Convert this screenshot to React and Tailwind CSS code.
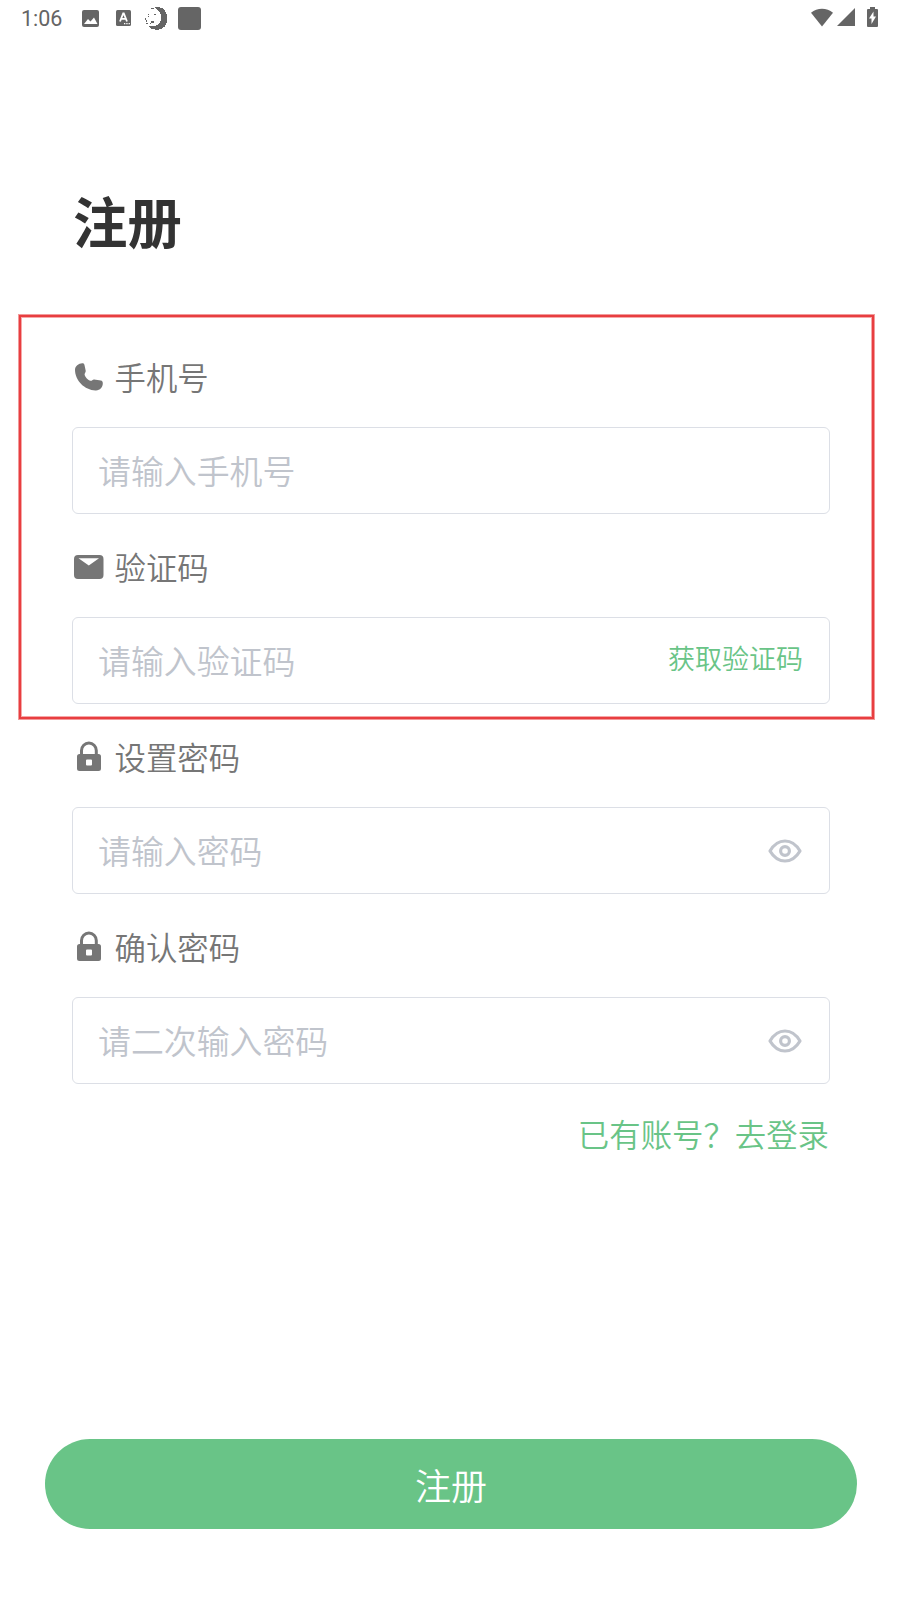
import React, { useState } from 'react'

const PhoneIcon = () => (
    <svg className="w-[34px] h-[34px]" viewBox="0 0 34 34" fill="currentColor">
        <path d="M5.2 5.2C7 3.600 9.600 2.800 11.200 3.300c1 .4 1.200 1.400 1.500 2.600l1 4.900c.3 1.700-1.300 2.400-1.100 3.900.4 2.200 3.600 5.500 5.900 6 1.500.3 2-1.500 3.700-1.300l6.600 1.200c1.500.3 2 1.200 2 2.600 0 4-2.700 7.100-6.800 7.200C13 30.700 3 20.500 3 9.800c0-1.900.8-3.400 2.200-4.600z" />
    </svg>
)

const MailIcon = () => (
    <svg className="w-[34px] h-[34px]" viewBox="0 0 34 34" fill="currentColor">
        <path fillRule="evenodd" d="M6 5h21.500a4 4 0 0 1 4 4v16a4 4 0 0 1-4 4H6a4 4 0 0 1-4-4V9a4 4 0 0 1 4-4zM6.500 8.300L16.800 15.500l10.200-7.200z" />
    </svg>
)

const LockIcon = () => (
    <svg className="w-[34px] h-[34px]" viewBox="0 0 34 34">
        <path d="M9.500 16v-5.500a7.400 7.400 0 0 1 14.800 0V16" fill="none" stroke="currentColor" strokeWidth="3" />
        <path fillRule="evenodd" fill="currentColor" d="M7.500 14h19a2.500 2.500 0 0 1 2.500 2.500v12a2.500 2.500 0 0 1-2.500 2.500h-19A2.500 2.500 0 0 1 5 28.500v-12A2.500 2.500 0 0 1 7.500 14zM15 19.500a1 1 0 0 0-1 1v4a1 1 0 0 0 1 1h4a1 1 0 0 0 1-1v-4a1 1 0 0 0-1-1z" />
    </svg>
)

const EyeIcon = () => (
    <svg className="w-[34px] h-[24px]" viewBox="0 0 34 24" fill="none" stroke="currentColor" strokeWidth="3.2" strokeLinejoin="round">
        <path d="M2 12C6 5.200 11 2 17 2s11 3.200 15 10c-4 6.800-9 10-15 10S6 18.800 2 12z" />
        <circle cx="17" cy="12" r="4.400" />
    </svg>
)

const StatusBar = () => (
    <header className="h-9 px-[22px] flex items-center justify-between text-[#656565]">
        <div className="flex items-center">
            <span className="-ml-px w-[61px] pt-[2px] font-normal font-['Roboto',sans-serif] text-[21.5px] leading-[34px]">1:06</span>
            <svg className="w-[17px] h-[17px]" viewBox="0 0 17 17">
                <rect width="17" height="17" rx="2" fill="currentColor" />
                <path d="M2 14l4-5 2.500 2.500L12 7.500l3.500 6.500z" fill="white" />
            </svg>
            <svg className="ml-[17px] w-[15px] h-[16px]" viewBox="0 0 15 16">
                <rect width="15" height="16" rx="1.500" fill="currentColor" />
                <path d="M4 11.500L7.200 3.500h.6L11 11.500M5.300 8.800h4.400" stroke="white" strokeWidth="1.800" fill="none" />
                <path d="M8 13.700h1.300M10.300 13.700h1.300M12.600 13.700h1.300" stroke="white" strokeWidth="1.300" />
            </svg>
            <svg className="ml-[14px] w-[23px] h-[23px]" viewBox="0 0 23 23" fill="currentColor" shapeRendering="crispEdges">
                <path d="M10 0h4c5 1 8.500 5.500 8.500 11.500C22.500 18 18 23 12 23c-4 0-7-1.500-9-4.500h4c3 1 5.500 0 7-1.500C18 13 17.500 5 10 1z" />
                <path d="M6 1h3v1H6zM3 7h1v1H3zM9 7h2v1H9zM3 9h1v1H3zM0 11h1v2H0zM1 13h1v2H1zM6 14h3v2H6zM1 16h2v1H1zM5 16h1v1H5z" />
            </svg>
            <span className="ml-[10px] w-[23px] h-[23px] rounded-[3px] bg-[#656565]" />
        </div>
        <div className="-mt-[2px] flex items-center">
            <svg className="w-[22px] h-[19px]" viewBox="0 0 23 19" fill="currentColor">
                <path d="M0 4.500C6.500-1 16.500-1 23 4.500L11.500 19z" />
            </svg>
            <svg className="ml-[4px] w-[18px] h-[18px]" viewBox="0 0 18 18" fill="currentColor">
                <path d="M18 0v18H0z" />
            </svg>
            <svg className="ml-[12px] w-[11px] h-[20px]" viewBox="0 0 11 20" fill="currentColor">
                <path fillRule="evenodd" d="M3 0h5v2h2a1 1 0 0 1 1 1v16a1 1 0 0 1-1 1H1a1 1 0 0 1-1-1V3a1 1 0 0 1 1-1h2zM6.500 4.500L2 11.500h2.500V17L9 9.500H6.500z" />
            </svg>
        </div>
    </header>
)

const Field = ({ icon, label, placeholder, type = 'text', action }) => {
    const [value, setValue] = useState('')

    return (
        <div className="pb-9">
            <label className="h-[67px] flex items-start text-[#767676]">
                {icon}
                <span className="ml-[8.5px] text-[31.4px] leading-[33px]">{label}</span>
            </label>
            <div className="h-[87px] pl-[25px] pr-[26px] flex items-center rounded-[6px] border border-[#dcdfe6]">
                <input
                    type={type}
                    value={value}
                    onChange={(e) => setValue(e.target.value)}
                    placeholder={placeholder}
                    className="flex-1 min-w-0 h-[48px] mb-[2px] text-[32.9px] outline-none placeholder:text-[#c0c4cc]"
                />
                {action}
            </div>
        </div>
    )
}

export default function App() {
    const [visible, setVisible] = useState({ password: false, confirm: false })

    const eyeButton = (key) => (
        <button type="button" onClick={() => setVisible(prev => ({ ...prev, [key]: !prev[key] }))} className="mr-px text-[#c0c4cc]">
            <EyeIcon />
        </button>
    )

    return (
        <div className="relative w-[900px] h-[1600px] overflow-hidden bg-white font-[350] font-['Noto_Sans_CJK_SC',sans-serif]">
            <StatusBar />

            <main className="pt-[144px] pl-[72px] pr-[70px]">
                <h1 className="h-[180px] pt-[2px] pl-px text-[54.4px] leading-[76px] font-bold text-[#333333]">注册</h1>

                <Field icon={<PhoneIcon />} label="手机号" placeholder="请输入手机号" />
                <Field
                    icon={<MailIcon />}
                    label="验证码"
                    placeholder="请输入验证码"
                    action={<button type="button" className="pb-[5px] text-[27px] leading-[40px] text-[#69c487]">获取验证码</button>}
                />
                <Field
                    icon={<LockIcon />}
                    label="设置密码"
                    placeholder="请输入密码"
                    type={visible.password ? 'text' : 'password'}
                    action={eyeButton('password')}
                />
                <Field
                    icon={<LockIcon />}
                    label="确认密码"
                    placeholder="请二次输入密码"
                    type={visible.confirm ? 'text' : 'password'}
                    action={eyeButton('confirm')}
                />

                <p className="-mt-[6px] pr-px text-right text-[31.4px] leading-[40px] text-[#69c487]">已有账号？去登录</p>
            </main>

            <div className="mt-[285px] pl-[45px] pr-[43px]">
                <button type="button" className="w-full h-[90px] rounded-full bg-[#69c487] text-white text-[36px]">注册</button>
            </div>

            {/* highlight over the phone and code fields */}
            <div className="absolute left-[18px] top-[314px] w-[857px] h-[406px] border border-[#f29a9a] pointer-events-none">
                <div className="h-full border-2 border-[#e83e40]">
                    <div className="h-full border border-[#f6a8a8]" />
                </div>
            </div>
        </div>
    )
}
